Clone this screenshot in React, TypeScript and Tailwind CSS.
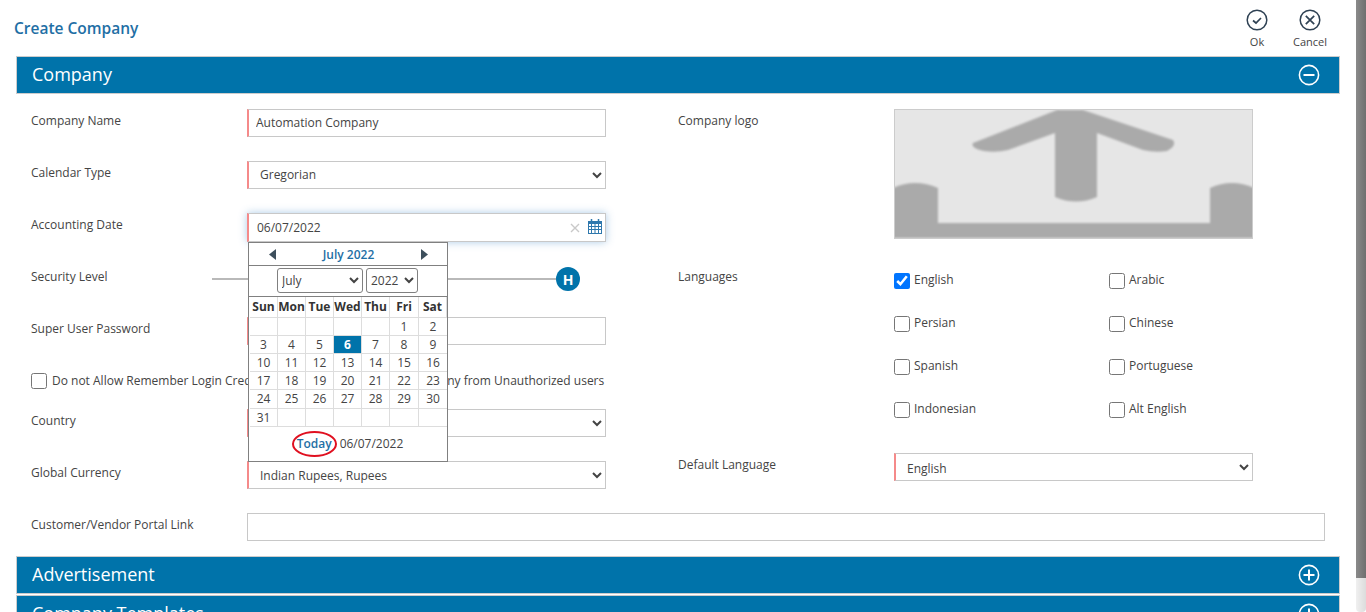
import { ReactNode } from "react";

const days = ["Sun", "Mon", "Tue", "Wed", "Thu", "Fri", "Sat"];
const dates = [
  "", "", "", "", "", "1", "2",
  "3", "4", "5", "6", "7", "8", "9",
  "10", "11", "12", "13", "14", "15", "16",
  "17", "18", "19", "20", "21", "22", "23",
  "24", "25", "26", "27", "28", "29", "30",
  "31", "", "", "", "", "", "",
];
const languages = ["English", "Arabic", "Persian", "Chinese", "Spanish", "Portuguese", "Indonesian", "Alt English"];

function SectionHeader({ title, open }: { title: string; open?: boolean }) {
  return (
    <div className="flex h-[38px] shrink-0 items-center justify-between border border-[#cccccc] bg-[#0073aa] pl-[15px] pr-[19px] text-[18px] text-white">
      <span className="pb-[2px]">{title}</span>
      <svg width="22" height="22" viewBox="0 0 22 22" fill="none" stroke="white" strokeWidth="1.6">
        <circle cx="11" cy="11" r="9.6" />
        <path d="M5.5 11h11" strokeWidth="2" />
        {!open && <path d="M11 5.5v11" strokeWidth="2" />}
      </svg>
    </div>
  );
}

function Row({ label, children }: { label: string; children: ReactNode }) {
  return (
    <div className="mb-6 flex h-7 items-start">
      <label className="w-[216px] shrink-0 pt-[3px] leading-[18px]">{label}</label>
      {children}
    </div>
  );
}

function TextBox({ value, required }: { value?: string; required?: boolean }) {
  return (
    <input
      readOnly
      value={value ?? ""}
      className={`h-7 w-full border border-[#c8c8c8] pb-[2px] pl-[7px] pr-2 text-[#444] outline-none ${required ? "border-l-2 border-l-[#f58a8a]" : ""}`}
    />
  );
}

function SelectBox({ value, padding = "pb-[2px]" }: { value: string; padding?: string }) {
  return (
    <select
      defaultValue={value}
      className={`h-7 w-full border border-[#c8c8c8] border-l-2 border-l-[#f58a8a] bg-white pl-[7px] text-[#444] outline-none ${padding}`}
    >
      <option>{value}</option>
    </select>
  );
}

function DatePopup() {
  return (
    <div className="absolute left-px top-[29px] z-10 w-[200px] border border-[#808080] bg-white text-[12px] text-[#444]">
      <div className="flex h-[23px] items-center justify-between border-b border-[#808080] pl-5 pr-[19px]">
        <svg width="7" height="11" viewBox="0 0 7 11" fill="#3d4f5c"><path d="M7 0v11L0 5.5z" /></svg>
        <span className="pt-[2px] font-semibold text-[#1f6fa5]">July 2022</span>
        <svg width="7" height="11" viewBox="0 0 7 11" fill="#3d4f5c"><path d="M0 0v11l7-5.5z" /></svg>
      </div>
      <div className="flex h-[31px] items-start gap-[3px] border-b border-[#808080] pl-7 pt-[2px]">
        <select defaultValue="July" className="h-[25px] w-[86px] rounded-[3px] border border-[#808080] bg-white text-[#444]">
          <option>July</option>
        </select>
        <select defaultValue="2022" className="h-[25px] w-[52px] rounded-[3px] border border-[#808080] bg-white text-[#444]">
          <option>2022</option>
        </select>
      </div>
      <div className="grid grid-cols-[28px_28px_28px_28px_28px_29px_28px] pl-px">
        {days.map((d) => (
          <div key={d} className="flex h-[21px] items-center justify-center border-b border-r border-[#dddddd] font-bold text-[#333] last:border-r-0">
            {d}
          </div>
        ))}
        {dates.map((d, i) => (
          <div
            key={i}
            className={`flex items-center justify-center border-b border-r border-[#dddddd] ${i >= 28 && i < 35 ? "h-[19px]" : "h-[18px]"} ${i % 7 === 6 ? "border-r-0" : ""} ${d === "6" ? "bg-[#0073aa] font-bold text-white" : ""}`}
          >
            {d}
          </div>
        ))}
      </div>
      <div className="flex h-[34px] items-center justify-center gap-[3px] pr-px">
        <span className="rounded-[50%] border-2 border-[#e01020] px-[3px] py-[2px] font-semibold leading-[18px] text-[#1f6fa5]">Today</span>
        <span>06/07/2022</span>
      </div>
    </div>
  );
}

function UploadPreview() {
  return (
    <div className="h-[130px] w-[359px] border border-[#cccccc] bg-[#e6e6e6]">
      <svg width="357" height="128" viewBox="0 0 357 128" fill="#aaaaaa">
        <defs>
          <filter id="soft"><feGaussianBlur stdDeviation="1.2" /></filter>
        </defs>
        <g filter="url(#soft)">
          <path d="M162 0h26l90 30q4 6-6 11-12 2-24-1l-46-17v64q-21 9-42 0V23l-47 17q-12 3-24 1-14-3-11-8z" />
          <path d="M-2 78q22-10 45 0v35h272V78q22-10 44 0v50H-2z" />
        </g>
      </svg>
    </div>
  );
}

export default function App() {
  return (
    <div className="flex h-[612px] w-full overflow-hidden bg-white font-['Open_Sans',sans-serif] text-[12px] text-[#444]">
      <div className="min-w-0 flex-1">
        <div className="flex h-14 justify-between pl-[14px] pr-[30px]">
          <h1 className="pt-4 text-[15.5px] font-semibold leading-6 text-[#1f6fa5]">Create Company</h1>
          <div className="flex gap-[21px] pt-[9px] text-[11px]">
            <div className="flex w-8 flex-col items-center gap-[3px]">
              <svg width="22" height="22" viewBox="0 0 22 22" fill="none" stroke="#2f4254" strokeWidth="1.5">
                <circle cx="11" cy="11" r="9.8" />
                <path d="M7 11.5l3 2.5 5-5" strokeWidth="1.7" />
              </svg>
              <span>Ok</span>
            </div>
            <div className="flex w-8 flex-col items-center gap-[3px]">
              <svg width="22" height="22" viewBox="0 0 22 22" fill="none" stroke="#2f4254" strokeWidth="1.5">
                <circle cx="11" cy="11" r="9.8" />
                <path d="M6.8 6.8l8.4 8.4M15.2 6.8l-8.4 8.4" strokeWidth="1.7" />
              </svg>
              <span>Cancel</span>
            </div>
          </div>
        </div>

        <div className="ml-4 mr-4 flex flex-col">
          <SectionHeader title="Company" open />
          <div className="px-[15px] pt-[15px]">
            <div className="flex gap-[72px]">
              <div className="w-[575px]">
                <Row label="Company Name">
                  <TextBox value="Automation Company" required />
                </Row>
                <Row label="Calendar Type">
                  <SelectBox value="Gregorian" />
                </Row>
                <Row label="Accounting Date">
                  <div className="relative h-7 w-full">
                    <div className="flex h-[29px] items-center border border-[#c8c8c8] border-l-2 border-l-[#f58a8a] pl-2 pr-[3px] shadow-[0_0_8px_rgba(70,140,200,0.45)]">
                      <span className="flex-1 pt-px">06/07/2022</span>
                      <svg className="mr-2" width="10" height="10" viewBox="0 0 10 10" stroke="#c9c9c9" strokeWidth="1.4">
                        <path d="M1 1l8 8M9 1l-8 8" />
                      </svg>
                      <svg className="mb-[2px]" width="14" height="15" viewBox="0 0 14 15" fill="none" stroke="#2f78ad">
                        <rect x="0.5" y="2.5" width="13" height="12" />
                        <path d="M0.5 3.5h13M0.5 4.5h13M0.5 7.5h13M0.5 10.5h13M3.5 4v10M7 4v10M10.5 4v10" />
                        <path d="M3.5 0v3M10.5 0v3" strokeWidth="1.5" />
                      </svg>
                    </div>
                    <DatePopup />
                  </div>
                </Row>
                <div className="mb-6 flex h-7 items-center">
                  <label className="-mt-1 w-[181px] shrink-0">Security Level</label>
                  <div className="h-[2px] flex-1 bg-[#b9b9b9]" />
                  <div className="flex h-6 w-6 items-center justify-center rounded-full bg-[#0073aa] text-[14px] font-bold text-white">H</div>
                  <div className="w-[26px]" />
                </div>
                <Row label="Super User Password">
                  <TextBox required />
                </Row>
                <div className="mb-5 mt-7 flex h-4 items-center gap-[5px]">
                  <input type="checkbox" className="h-4 w-4" />
                  <span className="whitespace-nowrap">Do not Allow Remember Login Credentials to Help Protect your Company from Unauthorized users</span>
                </div>
                <Row label="Country">
                  <SelectBox value="India" />
                </Row>
                <Row label="Global Currency">
                  <SelectBox value="Indian Rupees, Rupees" padding="pt-0" />
                </Row>
              </div>

              <div className="w-[575px]">
                <div className="flex h-[130px] items-start">
                  <label className="w-[216px] shrink-0 pt-[3px] leading-[18px]">Company logo</label>
                  <UploadPreview />
                </div>
                <div className="mt-[26px] flex h-[188px]">
                  <label className="w-[216px] shrink-0 pt-[3px] leading-[18px]">Languages</label>
                  <div className="grid w-[359px] grid-cols-[215px_1fr] content-start gap-y-[27px] pt-2">
                    {languages.map((l, i) => (
                      <div key={l} className="flex h-4 items-center gap-[4px]">
                        <input type="checkbox" defaultChecked={i === 0} className="h-4 w-4" />
                        <span className="pb-[2px]">{l}</span>
                      </div>
                    ))}
                  </div>
                </div>
                <div className="flex h-7 items-start">
                  <label className="w-[216px] shrink-0 pt-[3px] leading-[18px]">Default Language</label>
                  <div className="w-[359px]">
                    <SelectBox value="English" padding="pt-[2px]" />
                  </div>
                </div>
              </div>
            </div>
            <div className="flex h-7 items-start">
              <label className="w-[216px] shrink-0 pt-[3px] leading-[18px]">Customer/Vendor Portal Link</label>
              <TextBox />
            </div>
          </div>
          <div className="mt-[15px] flex flex-col gap-px">
            <SectionHeader title="Advertisement" />
            <SectionHeader title="Company Templates" />
          </div>
        </div>
      </div>

      <div className="flex w-[10px] shrink-0 flex-col">
        <div className="h-[578px] bg-gradient-to-r from-[#8a8a8a] to-[#6f6f6f]" />
        <div className="flex-1 rounded-b-[4px] bg-gradient-to-r from-[#f0f0f0] to-[#dcdcdc]" />
      </div>
    </div>
  );
}
